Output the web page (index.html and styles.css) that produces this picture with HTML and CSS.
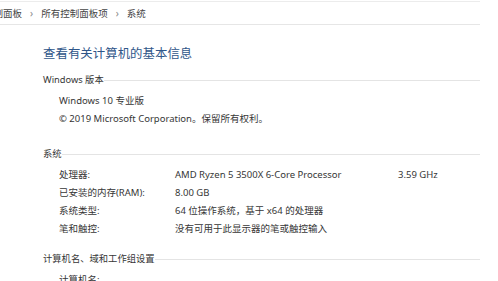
FILE: index.html
```html
<!DOCTYPE html>
<html lang="zh-CN">
<head>
<meta charset="utf-8">
<title>系统</title>
<link rel="stylesheet" href="styles.css">
</head>
<body>
<div class="page">
  <nav class="crumbs">
    <span class="crumb first">控制面板</span>
    <span class="sep">›</span>
    <span class="crumb">所有控制面板项</span>
    <span class="sep">›</span>
    <span class="crumb">系统</span>
  </nav>
  <main class="content">
    <h1 class="title">查看有关计算机的基本信息</h1>

    <section class="group">
      <h2 class="group-head"><span>Windows 版本</span><i class="rule"></i></h2>
      <div class="lines">
        <div class="line">Windows 10 专业版</div>
        <div class="line">© 2019 Microsoft Corporation。保留所有权利。</div>
      </div>
    </section>

    <section class="group sys">
      <h2 class="group-head"><span>系统</span><i class="rule"></i></h2>
      <div class="table">
        <div class="row"><span class="k">处理器:</span><span class="v">AMD Ryzen 5 3500X 6-Core Processor</span><span class="x">3.59 GHz</span></div>
        <div class="row"><span class="k">已安装的内存(RAM):</span><span class="v">8.00 GB</span></div>
        <div class="row"><span class="k">系统类型:</span><span class="v">64 位操作系统，基于 x64 的处理器</span></div>
        <div class="row"><span class="k">笔和触控:</span><span class="v">没有可用于此显示器的笔或触控输入</span></div>
      </div>
    </section>

    <section class="group net">
      <h2 class="group-head"><span>计算机名、域和工作组设置</span><i class="rule"></i></h2>
      <div class="table">
        <div class="row"><span class="k">计算机名:</span><span class="v"></span></div>
      </div>
    </section>
  </main>
</div>
</body>
</html>
```

FILE: styles.css
```css
html, body {
  margin: 0;
  padding: 0;
  background: #ffffff;
}
body {
  width: 498px;
  height: 281px;
  overflow: hidden;
  font-family: "Noto Sans", "Noto Sans CJK SC", sans-serif;
  font-size: 9.5px;
  color: #363636;
}
.page {
  padding-top: 1px;
  width: 480px;
}
.crumbs {
  display: flex;
  align-items: center;
  gap: 8px;
  height: 22px;
  border-top: 1px solid #ececec;
  border-bottom: 1px solid #e6e6e6;
  white-space: nowrap;
  overflow: hidden;
  color: #444;
}
.crumb.first {
  margin-left: -16px;
}
.sep {
  color: #888;
  font-size: 10px;
}
.content {
  padding-left: 43px;
}
.title {
  margin: 20px 0 0;
  font-size: 12.4px;
  line-height: 18px;
  font-weight: normal;
  color: #2f5689;
  letter-spacing: 0.05px;
}
.group-head {
  display: flex;
  align-items: center;
  margin: 0;
  height: 18px;
  font-size: 9.3px;
  font-weight: normal;
  color: #363636;
}
.group-head .rule {
  flex: 1;
  height: 0;
  margin-top: 3px;
  border-top: 1px solid #e4e4e4;
}
.group {
  margin-top: 7px;
}
.group.sys {
  margin-top: 16px;
}
.group.net {
  margin-top: 11px;
}
.lines,
.table {
  margin-top: 4px;
  padding-left: 16px;
}
.line,
.row {
  height: 18px;
  line-height: 18px;
  white-space: nowrap;
}
.row {
  display: grid;
  grid-template-columns: 116px 223px auto;
}
```
